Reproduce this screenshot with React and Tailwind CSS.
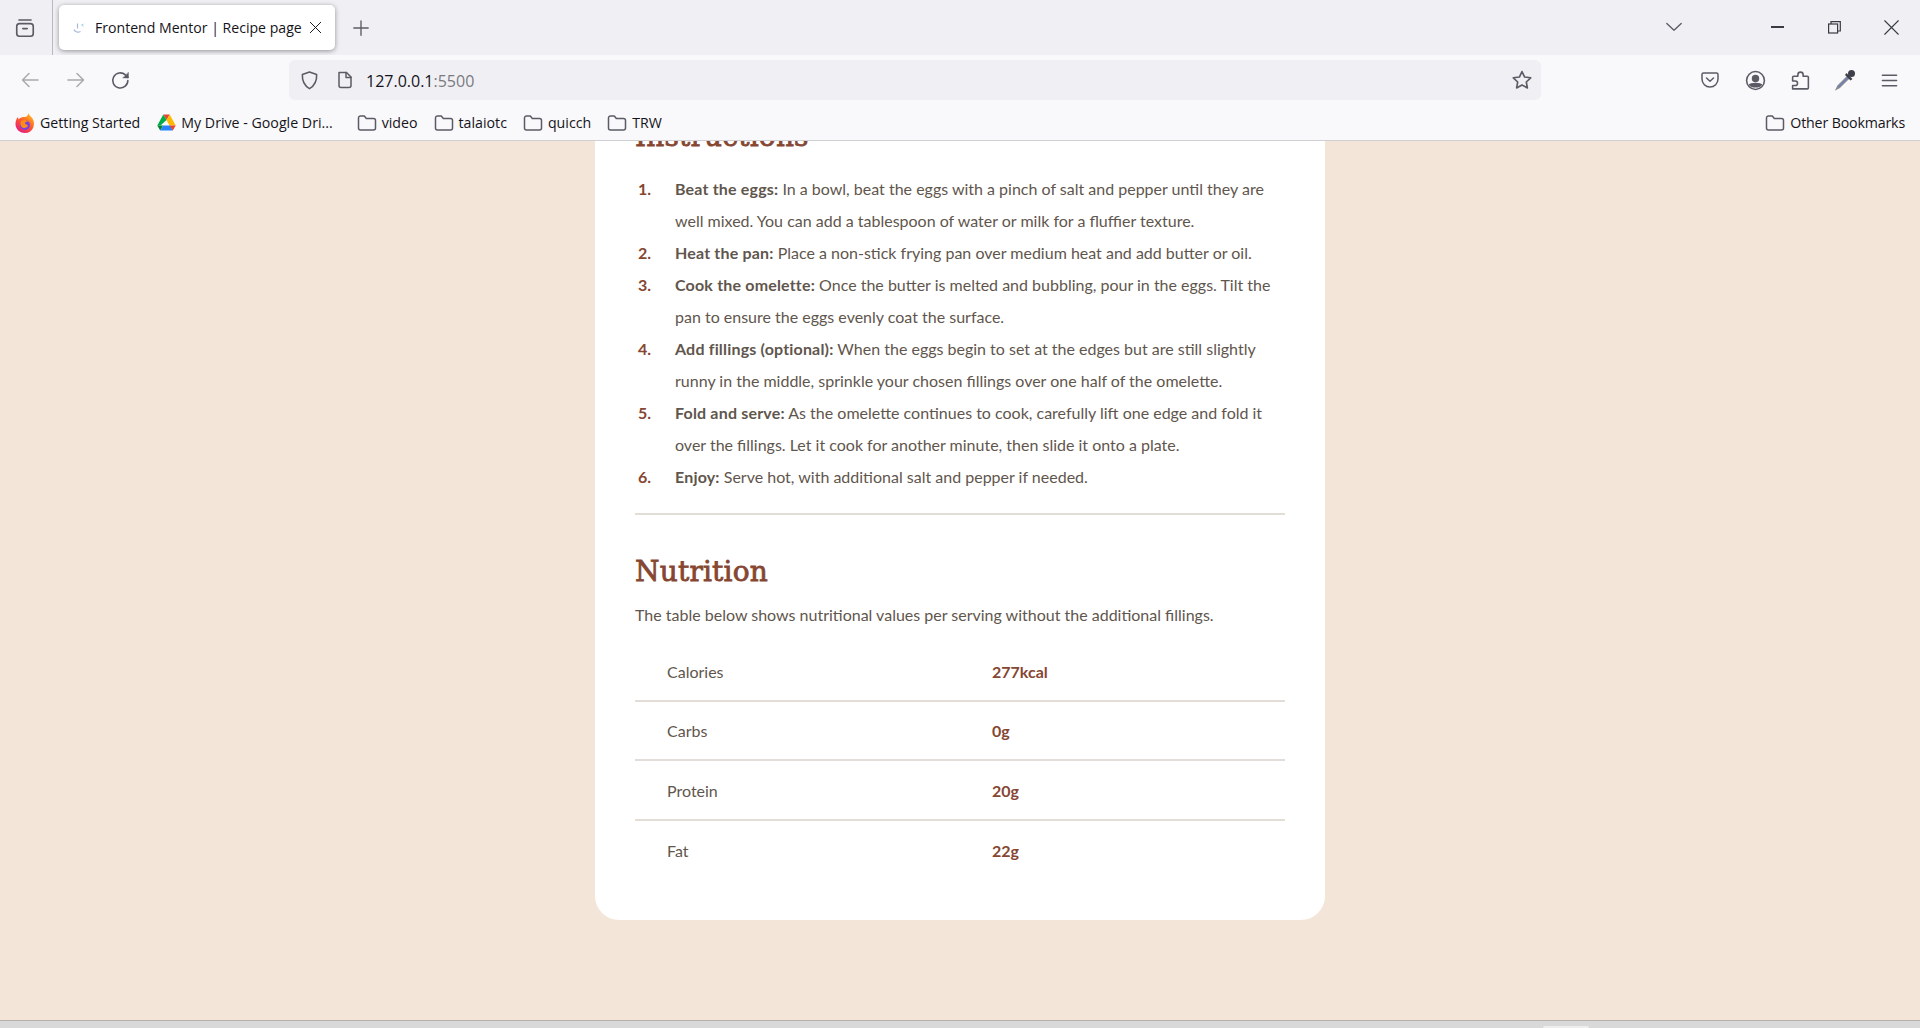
import React from "react";

const instructions = [
  ["Beat the eggs:", "In a bowl, beat the eggs with a pinch of salt and pepper until they are well mixed. You can add a tablespoon of water or milk for a fluffier texture."],
  ["Heat the pan:", "Place a non-stick frying pan over medium heat and add butter or oil."],
  ["Cook the omelette:", "Once the butter is melted and bubbling, pour in the eggs. Tilt the pan to ensure the eggs evenly coat the surface."],
  ["Add fillings (optional):", "When the eggs begin to set at the edges but are still slightly runny in the middle, sprinkle your chosen fillings over one half of the omelette."],
  ["Fold and serve:", "As the omelette continues to cook, carefully lift one edge and fold it over the fillings. Let it cook for another minute, then slide it onto a plate."],
  ["Enjoy:", "Serve hot, with additional salt and pepper if needed."],
];

const nutrition = [
  ["Calories", "277kcal"],
  ["Carbs", "0g"],
  ["Protein", "20g"],
  ["Fat", "22g"],
];

const Icon = ({ size = 20, className = "", children }) => (
  <svg width={size} height={size} viewBox="0 0 20 20" fill="none" stroke="currentColor" strokeWidth="1.5" strokeLinecap="round" strokeLinejoin="round" className={`shrink-0 ${className}`}>
    {children}
  </svg>
);

const Folder = () => (
  <Icon size={20} className="text-[#5b5b66]">
    <path d="M1.500 5A2 2 0 0 1 3.500 3h3.800l2 2.500H16.500a2 2 0 0 1 2 2V15a2 2 0 0 1-2 2h-13a2 2 0 0 1-2-2z" />
  </Icon>
);

const FirefoxLogo = () => (
  <svg width="20" height="22" viewBox="0 0 20 22" className="shrink-0">
    <defs>
      <linearGradient id="ff" x1="0.8" y1="0.1" x2="0.2" y2="1">
        <stop offset="0" stopColor="#ffb01f" />
        <stop offset="0.45" stopColor="#ff5a2c" />
        <stop offset="1" stopColor="#e31587" />
      </linearGradient>
    </defs>
    <path d="M13 1c1 2.500 4.500 4 5.500 7.500C20 13 18 21 10 21 4 21 0.500 16.500 0.500 12 0.500 9 1.500 6.500 3 5l0.500 2.500C5 5.500 8 5 9 5 11.500 5 13.500 3.500 13 1z" fill="url(#ff)" />
    <circle cx="10" cy="13" r="5" fill="#7542e5" />
    <path d="M6 9c2-1.500 6-1.500 8 1-2-1-4 0-4 1.500 0 1 2.500 1 3 2-0.500 2-3 3-5 2.300C6 15 4.500 12 6 9z" fill="#ff8a16" />
  </svg>
);

const DriveLogo = () => (
  <svg width="19" height="17" viewBox="0 0 19 17" className="shrink-0">
    <path d="M6.300 0.500h6.400L9.500 6z" fill="#ea4335" />
    <path d="M6.300 0.500L0.300 11.500l3.200 0L9.500 6z" fill="#00ac47" />
    <path d="M12.700 0.500l6 11h-6.200L9.500 6z" fill="#ffba00" />
    <path d="M0.300 11.500l2.900 5 3-5z" fill="#00832d" />
    <path d="M6.200 11.500h7l2.600 5H3.200z" fill="#2684fc" />
    <path d="M12.500 11.500h6.200l-2.900 5z" fill="#ea4335" />
  </svg>
);

const TabStrip = () => (
  <div className="flex h-[55px] items-start bg-[#f0f0f4] text-[#5b5b66]">
    <div className="flex h-full w-[53px] items-center justify-start border-r border-[#b9b9be] pl-[14px]">
      <Icon size={22}>
        <rect x="2.500" y="6" width="15" height="11.500" rx="2.500" />
        <path d="M4.500 2.700h11M8 10.500h4" />
      </Icon>
    </div>
    <div className="ml-[6px] mt-[5px] flex h-[45px] w-[276px] items-center rounded-[5px] bg-white pl-[14px] shadow-[0_1px_5px_rgba(0,0,0,0.4)]">
      <svg width="12" height="12" viewBox="0 0 12 12" fill="none" className="shrink-0">
        <path d="M4.500 1.500v5M1 7.500c1 2.500 4 3.500 6.500 2" stroke="#a8b8dd" strokeWidth="1.200" />
        <path d="M8.500 3l2 -1M8.500 3l2 1.500" stroke="#9fd4e8" strokeWidth="1" />
      </svg>
      <span className="ml-[10px] mt-[1px] whitespace-nowrap font-['Open_Sans',sans-serif] text-[14.100px] leading-none text-[#15141a]">Frontend Mentor | Recipe page</span>
      <Icon size={13} className="ml-[7px] text-[#15141a]">
        <path d="M2 2l16 16M18 2L2 18" />
      </Icon>
    </div>
    <div className="ml-[17px] mt-[19px]">
      <Icon size={18}>
        <path d="M10 2v16M2 10h16" />
      </Icon>
    </div>
    <div className="ml-auto flex h-full items-center pb-[1px]">
      <Icon size={18} className="mr-[1px]">
        <path d="M2 6l8 7.500L18 6" />
      </Icon>
      <div className="ml-[87px] h-[1.500px] w-[13px] bg-[#3a3a44]" />
      <svg width="13" height="13" viewBox="0 0 13 13" fill="none" stroke="#3a3a44" strokeWidth="1.200" className="ml-[44px]">
        <rect x="0.600" y="3" width="9" height="9" />
        <path d="M3 3V0.700h9.300V10H9.600" />
      </svg>
      <Icon size={15} className="ml-[43px] mr-[21px] text-[#3a3a44]">
        <path d="M1 1l18 18M19 1L1 19" />
      </Icon>
    </div>
  </div>
);

const Toolbar = () => (
  <div className="flex h-[50px] items-center bg-[#f9f9fb] text-[#5b5b66]">
    <Icon size={20} className="ml-[20px] text-[#a9a9af]">
      <path d="M18 10H2.500M9 3.500L2.500 10 9 16.500" />
    </Icon>
    <Icon size={20} className="ml-[26px] text-[#a9a9af]">
      <path d="M2 10h15.500M11 3.500l6.500 6.500-6.500 6.500" />
    </Icon>
    <Icon size={21} className="ml-[24px]">
      <path d="M17 10a7.200 7.200 0 1 1-2.300-5.300L17 7" />
      <path d="M17.500 2.500v5h-5z" fill="currentColor" strokeWidth="0.500" />
    </Icon>
    <div className="ml-[158px] flex h-[40px] w-[1252px] items-center rounded-[6px] bg-[#f0f0f4] pl-[10px] pr-[8px]">
      <Icon size={21}>
        <path d="M10 2l6.800 2.300c0.300 5.700-1.700 10.500-6.800 13.500C4.900 14.800 2.900 10 3.200 4.300z" />
      </Icon>
      <Icon size={20} className="ml-[15px]">
        <path d="M4 2.500h7.500L16 7v8.500a2 2 0 0 1-2 2H6a2 2 0 0 1-2-2z" />
        <path d="M11 2.500v5h5" />
      </Icon>
      <span className="ml-[11px] mt-[2px] whitespace-nowrap font-['Open_Sans',sans-serif] text-[16px] leading-none text-[#15141a]">
        127.0.0.1<span className="text-[#7a7a80]">:5500</span>
      </span>
      <Icon size={22} className="ml-auto">
        <path d="M10 2.300l2.400 5 5.500 0.700-4 3.800 1 5.400-4.900-2.700-4.900 2.700 1-5.400-4-3.800 5.500-0.700z" />
      </Icon>
    </div>
    <Icon size={20} className="ml-[159px]">
      <path d="M3.500 3h13A1.500 1.500 0 0 1 18 4.500V9a8 8 0 0 1-16 0V4.500A1.500 1.500 0 0 1 3.500 3z" />
      <path d="M6.500 8l3.500 3.200L13.500 8" />
    </Icon>
    <Icon size={21} className="ml-[25px]">
      <circle cx="10" cy="10" r="8.500" />
      <circle cx="10" cy="8" r="2.800" fill="currentColor" />
      <path d="M4.500 14c1-1.600 10-1.600 11 0-2 2.600-9 2.600-11 0z" fill="currentColor" />
    </Icon>
    <Icon size={21} className="ml-[24px]">
      <path d="M2.500 18v-3.200H5a2.200 2.200 0 0 0 0-4.400H2.500V7a1 1 0 0 1 1-1h4V4.500a2.500 2.500 0 0 1 5 0V6h4a1 1 0 0 1 1 1v10a1 1 0 0 1-1 1z" />
    </Icon>
    <svg width="22" height="22" viewBox="0 0 22 22" fill="none" className="ml-[23px] shrink-0">
      <path d="M14.500 6.500L4 17l-1.500 3 3-1.500L16 8z" fill="#4f78dc" stroke="#8a8a92" strokeWidth="1.500" />
      <path d="M12.500 4l6 6-2 1.500-5.500-5.500z" fill="#3f3f4a" />
      <circle cx="17.500" cy="4.500" r="3.500" fill="#3f3f4a" />
    </svg>
    <Icon size={19} className="ml-[24px]">
      <path d="M2.500 4.500h15M2.500 10h15M2.500 15.500h15" />
    </Icon>
  </div>
);

const Bookmark = ({ icon, label, className = "", labelClass = "" }) => (
  <div className={`flex items-center gap-[5px] ${className}`}>
    {icon}
    <span className={`whitespace-nowrap ${labelClass}`}>{label}</span>
  </div>
);

const BookmarksBar = () => (
  <div className="flex h-[36px] items-center justify-between border-b border-[#cfcfd4] bg-[#f9f9fb] pl-[15px] pr-[15px] pt-[1px] font-['Open_Sans',sans-serif] text-[14.200px] text-[#15141a]">
    <div className="flex items-center">
      <Bookmark icon={<FirefoxLogo />} label="Getting Started" />
      <Bookmark icon={<DriveLogo />} label="My Drive - Google Dri..." className="ml-[17px]" />
      <Bookmark icon={<Folder />} label="video" className="ml-[24px]" />
      <Bookmark icon={<Folder />} label="talaiotc" className="ml-[16px]" />
      <Bookmark icon={<Folder />} label="quicch" className="ml-[16px]" />
      <Bookmark icon={<Folder />} label="TRW" className="ml-[16px]" />
    </div>
    <Bookmark icon={<Folder />} label="Other Bookmarks" labelClass="tracking-[-0.15px]" />
  </div>
);

const headingClass = "font-['DejaVu_Serif',serif] text-[28px] tracking-[0.2px] leading-[36px] text-[#854632] [-webkit-text-stroke:0.8px_#854632]";

const RecipeCard = () => (
  <div className="mx-auto mt-[-22px] w-[730px] rounded-[24px] bg-white px-[40px] pb-[40px] font-['Lato',sans-serif] text-[16px] leading-[32px] text-[#5f564d]">
    <h2 className={headingClass}>Instructions</h2>
    <ol className="mt-[18px]">
      {instructions.map(([title, text], i) => (
        <li key={title} className="flex">
          <span className="ml-[3px] w-[37px] shrink-0 font-bold text-[#854632]">{i + 1}.</span>
          <span>
            <b className="font-bold tracking-[0.18px]">{title}</b> {text}
          </span>
        </li>
      ))}
    </ol>
    <hr className="mt-[20px] border-t-2 border-[#e3ddd7]" />
    <h2 className={`mt-[39px] ${headingClass}`}>Nutrition</h2>
    <p className="mt-[9px]">The table below shows nutritional values per serving without the additional fillings.</p>
    <div className="mt-[11px]">
      {nutrition.map(([name, value], i) => (
        <div key={name} className={`grid h-[59.500px] grid-cols-2 items-center pt-[2px] ${i < 3 ? "border-b-2 border-[#e3ddd7]" : ""}`}>
          <span className="pl-[32px]">{name}</span>
          <span className="pl-[32px] font-bold text-[#854632]">{value}</span>
        </div>
      ))}
    </div>
  </div>
);

const App = () => (
  <div className="flex h-[1028px] flex-col overflow-hidden">
    <TabStrip />
    <Toolbar />
    <BookmarksBar />
    <main className="min-h-0 flex-1 overflow-hidden bg-[#f3e5d7]">
      <RecipeCard />
    </main>
    <div className="flex h-[8px] items-end justify-end border-t border-[#b5b0ab] bg-[#d9d9d9] pr-[331px]">
      <div className="h-[2px] w-[46px] rounded-t-[2px] bg-[#eeeeee]" />
    </div>
  </div>
);

export default App;
